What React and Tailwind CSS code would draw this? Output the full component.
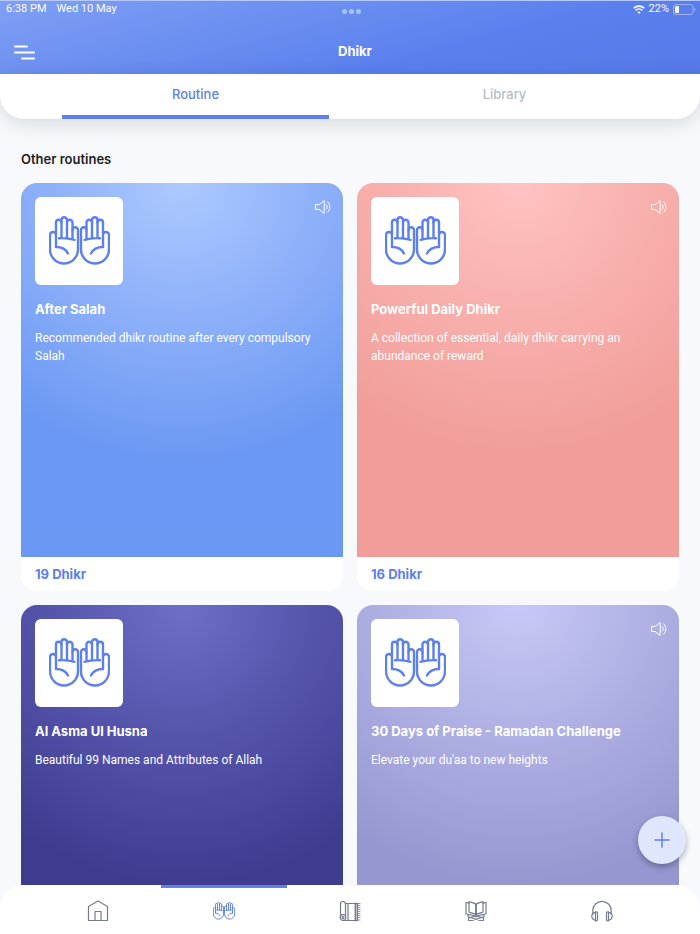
import React, { useState } from "react";
import { Plus } from "lucide-react";

const routines = [
  {
    title: "After Salah",
    text: "Recommended dhikr routine after every compulsory Salah",
    count: 19,
    audio: true,
    bg: "bg-[radial-gradient(circle_at_50%_0%,#adc9ff_0px,#8fb1f9_130px,#6b98f3_280px)]",
  },
  {
    title: "Powerful Daily Dhikr",
    text: "A collection of essential, daily dhikr carrying an abundance of reward",
    count: 16,
    audio: true,
    bg: "bg-[radial-gradient(circle_at_50%_0%,#ffc3c1_0px,#f8b0ad_130px,#f19d99_280px)]",
  },
  {
    title: "Al Asma Ul Husna",
    text: "Beautiful 99 Names and Attributes of Allah",
    audio: false,
    bg: "bg-[radial-gradient(circle_at_50%_0%,#6f6fc8_0px,#5655ac_130px,#3d3c8f_280px)]",
  },
  {
    title: "30 Days of Praise - Ramadan Challenge",
    text: "Elevate your du'aa to new heights",
    audio: true,
    bg: "bg-[radial-gradient(circle_at_50%_0%,#c8c9f8_0px,#afb1e4_130px,#9697d0_280px)]",
  },
];

const Hand = () => (
  <>
    <path d="M19 37.500C17 33.500 13 31 7 31V19a3 3 0 0 0-6 0v14.500a14 14 0 0 0 28 0V14a2.700 2.700 0 0 0-5.500 0V6.500a2.750 2.750 0 0 0-5.500 0V4a2.750 2.750 0 0 0-5.500 0V6.500a2.750 2.750 0 0 0-5.500 0V20V31" />
    <path d="M12.500 6v16M18 6v16.500M23.500 14v9M10 22.300c5-.5 10 0 15.500 1.500" />
  </>
);

const HandsIcon = ({ className, strokeWidth = 2.4 }) => (
  <svg
    viewBox="0 0 61 50"
    fill="none"
    stroke="currentColor"
    strokeWidth={strokeWidth}
    strokeLinecap="round"
    strokeLinejoin="round"
    className={className}
    aria-hidden="true"
  >
    <Hand />
    <g transform="translate(61 0) scale(-1 1)">
      <Hand />
    </g>
  </svg>
);

const NavSvg = ({ children }) => (
  <svg
    viewBox="0 0 22 22"
    fill="none"
    stroke="currentColor"
    strokeWidth="1.2"
    strokeLinejoin="round"
    strokeLinecap="round"
    className="size-[22px]"
    aria-hidden="true"
  >
    {children}
  </svg>
);

const HomeIcon = () => (
  <NavSvg>
    <path d="M1.500 6.500 11 1l9.500 5.500v14h-19z" />
    <path d="M8 20.500V11.500h6v9" />
  </NavSvg>
);

const MatIcon = () => (
  <NavSvg>
    <path d="M1.500 17.500V4a2.500 2.500 0 0 1 5 0v11.500" />
    <circle cx="4" cy="17.500" r="2.800" />
    <circle cx="4" cy="17.500" r=".9" />
    <path d="M6.500 3.500h12v17H4.500M9 3.500v17" />
    <path d="M16.500 3.500v17" strokeWidth="1.800" />
    <path d="M18.500 3.500H21M18.500 5.500H21M18.500 7.500H21M18.500 9.500H21M18.500 11.500H21M18.500 13.500H21M18.500 15.500H21M18.500 17.500H21M18.500 20H21" strokeWidth=".8" />
  </NavSvg>
);

const QuranIcon = () => (
  <NavSvg>
    <path d="M11 4.500C9 2.500 6.500 3 4 1.500v10.500c2.500 1.500 5 .8 7 2.800 2-2 4.500-1.300 7-2.800V1.500c-2.500 1.500-5 1-7 3zv10" />
    <path d="M11 4.500v10" strokeWidth="1.800" />
    <path d="M4 3.200 1 2.500V14c3.500 1 7 .5 10 2.800 3-2.300 6.500-1.800 10-2.800V2.500l-3 .7" />
    <path d="M3 15v1.800L15 20.500h3.500V18l-8-2.200M19 15v1.800L7 20.500H3.500V18l8-2.200" />
  </NavSvg>
);

const HeadphonesIcon = () => (
  <NavSvg>
    <path d="M1.800 14V10.500a9.200 9.200 0 0 1 18.400 0V14" />
    <path d="M4.500 11.800h1a1 1 0 0 1 1 1v7a1 1 0 0 1-1 1h-1zM17.500 11.800h-1a1 1 0 0 0-1 1v7a1 1 0 0 0 1 1h1z" />
    <path d="M4.500 12.300C2 12.800.8 14 .8 16.200s1.200 3.500 3.700 4M17.500 12.300c2.500.5 3.700 1.700 3.700 3.900s-1.200 3.500-3.700 4" />
  </NavSvg>
);

const SpeakerIcon = () => (
  <svg viewBox="0 0 16 16" fill="none" stroke="currentColor" strokeLinejoin="round" strokeLinecap="round" className="size-4" aria-hidden="true">
    <path d="M1 5.500h3.200L9.200 1.500v13l-5-4H1z" />
    <path d="M11 5.500a3 3 0 0 1 0 5M12.500 2.800c3.200 2.500 3.200 7.900 0 10.400" />
  </svg>
);

const RoutineCard = ({ routine }) => (
  <article className="overflow-hidden rounded-2xl bg-white">
    <div className={`h-[374px] p-3.5 text-white ${routine.bg}`}>
      <div className="flex items-start justify-between">
        <div className="flex size-[88px] items-center justify-center rounded-md bg-white text-[#5d80ea]">
          <HandsIcon className="w-[61px]" />
        </div>
        {routine.audio && (
          <button type="button" aria-label="Play audio" className="mt-0.5 -mr-0.5">
            <SpeakerIcon />
          </button>
        )}
      </div>
      <h3 className="mt-3.5 text-[13px] leading-5 font-bold">{routine.title}</h3>
      <p className="mt-2.5 font-['Roboto',sans-serif] text-xs leading-[18px]">{routine.text}</p>
    </div>
    {routine.count && (
      <p className="px-3.5 py-2 text-[13px] leading-[18px] font-bold text-[#5d80ea]">{routine.count} Dhikr</p>
    )}
  </article>
);

const navItems = [
  { label: "Home", Icon: HomeIcon },
  { label: "Dhikr", Icon: () => <HandsIcon className="w-[22px]" strokeWidth={2.6} /> },
  { label: "Prayer", Icon: MatIcon },
  { label: "Quran", Icon: QuranIcon },
  { label: "Audio", Icon: HeadphonesIcon },
];

const App = () => {
  const [tab, setTab] = useState("Routine");
  const [page, setPage] = useState("Dhikr");

  return (
    <div className="flex h-screen flex-col overflow-hidden bg-[#f8f9fd] font-['Inter',sans-serif] text-[#1c1d22]">
      {/* Header */}
      <header className="bg-[linear-gradient(165deg,#7fa0f4_0%,#5a80ee_65%,#577ae9_100%)] text-white">
        <div className="flex h-[18px] items-center justify-between border-t border-[#b5c8fa] pr-1 pl-1.5 font-['Roboto',sans-serif] text-[11px]">
          <div className="flex flex-1 gap-2.5">
            <span>6:38 PM</span>
            <span>Wed 10 May</span>
          </div>
          <div className="flex gap-0.5 pt-1">
            <i className="size-[5px] rounded-full bg-[#a6c4fb]" />
            <i className="size-[5px] rounded-full bg-[#a6c4fb]" />
            <i className="size-[5px] rounded-full bg-[#a6c4fb]" />
          </div>
          <div className="flex flex-1 items-center justify-end gap-1">
            <svg viewBox="0 0 12 9" fill="none" stroke="currentColor" strokeWidth="1.600" className="h-[9px] w-3" aria-hidden="true">
              <path d="M.7 3.300a7.600 7.600 0 0 1 10.600 0M2.700 5.400a4.700 4.700 0 0 1 6.600 0" />
              <path d="M6 8.800 4.400 7.200a2.300 2.300 0 0 1 3.200 0z" fill="currentColor" stroke="none" />
            </svg>
            <span>22%</span>
            <svg viewBox="0 0 23 11" className="h-[11px] w-[23px]" aria-hidden="true">
              <rect x=".5" y=".5" width="19.500" height="10" rx="2.500" fill="none" stroke="#9bb3f6" />
              <rect x="2" y="2" width="4" height="7" rx="1" fill="#fff" />
              <path d="M21.300 3.800c1.500.5 1.500 2.900 0 3.400z" fill="#9bb3f6" />
            </svg>
          </div>
        </div>
        <div className="grid h-14 grid-cols-3 items-center px-3.5 pt-3">
          <button type="button" aria-label="Menu" className="w-fit">
            <svg viewBox="0 0 21 15" fill="none" stroke="currentColor" strokeWidth="1.800" strokeLinecap="round" className="h-[15px] w-[21px]">
              <path d="M1 1.500h12M1 7.500h19M8 13.500h12" />
            </svg>
          </button>
          <h1 className="pl-2.5 text-center text-[13px] font-bold">Dhikr</h1>
        </div>
      </header>

      {/* Tabs */}
      <div className="relative z-10 rounded-b-3xl bg-white shadow-[0_4px_20px_rgba(0,0,0,0.14)]">
        <div className="grid grid-cols-2 gap-[42px] px-[62px]" role="tablist">
          {["Routine", "Library"].map((name) => (
            <button
              key={name}
              type="button"
              role="tab"
              aria-selected={tab === name}
              onClick={() => setTab(name)}
              className={`h-[45px] border-b-4 text-[13px] font-medium ${tab === name ? "border-[#5d80ea] text-[#5d80ea]" : "border-transparent text-[#b9bbc6]"}`}
            >
              {name}
            </button>
          ))}
        </div>
      </div>

      {/* Routines */}
      <main className="min-h-0 flex-1 overflow-y-auto px-[21px] pt-[30px] [scrollbar-width:none]">
        <h2 className="text-[13px] leading-5 font-semibold">Other routines</h2>
        <div className="mt-3.5 grid grid-cols-2 gap-3.5">
          {routines.map((routine) => (
            <RoutineCard key={routine.title} routine={routine} />
          ))}
        </div>
      </main>

      <button
        type="button"
        aria-label="Add routine"
        className="fixed right-3.5 bottom-[70px] z-20 flex size-12 items-center justify-center rounded-full bg-[#e0e7fd] text-[#5d80ea] shadow-[0_3px_6px_rgba(0,0,0,0.3)]"
      >
        <Plus size={24} strokeWidth={1.5} />
      </button>

      {/* Bottom navigation */}
      <nav className="rounded-t-3xl bg-white px-[35px]">
        <div className="grid grid-cols-5">
          {navItems.map(({ label, Icon }) => (
            <button
              key={label}
              type="button"
              aria-label={label}
              onClick={() => setPage(label)}
              className={`flex h-[49px] items-center justify-center border-t-3 ${page === label ? "border-[#5d80ea] text-[#5d80ea]" : "border-transparent text-[#777b8e]"}`}
            >
              <Icon />
            </button>
          ))}
        </div>
      </nav>
    </div>
  );
};

export default App;
